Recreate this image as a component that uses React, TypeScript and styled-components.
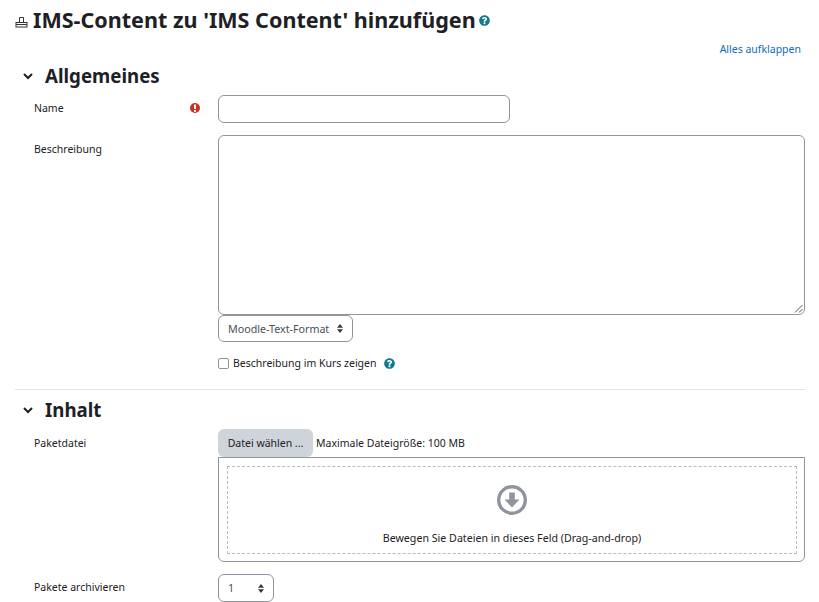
import React from "react";
import styled, { createGlobalStyle } from "styled-components";

const Global = createGlobalStyle`
  html, body { margin: 0; padding: 0; background: #fff; overflow: hidden; height: 602px; }
  body { font-family: "Noto Sans", "Open Sans", sans-serif; font-size: 10.5px; color: #1d2125; }
`;

const Page = styled.main`
  width: 819px;
  height: 602px;
  padding: 0 14px 0 15px;
  box-sizing: border-box;
  overflow: hidden;
`;

const TitleRow = styled.header`
  display: flex;
  align-items: center;
  height: 40px;
`;

const TitleIcon = styled.svg`
  width: 13px;
  height: 13px;
  margin: 2px 5px 0 0;
  flex: none;
`;

const Title = styled.h1`
  margin: 0;
  font-size: 21.55px;
  line-height: 40px;
  font-weight: 700;
  white-space: nowrap;
`;

const CollapseRow = styled.div`
  display: flex;
  justify-content: flex-end;
  height: 18px;
  line-height: 18px;
  padding-right: 4px;
`;

const Link = styled.a`
  color: #0f6cbf;
`;

const SectionHead = styled.div<{ $top?: number }>`
  display: flex;
  align-items: center;
  height: 36px;
  margin-top: ${(p) => p.$top ?? 0}px;
  margin-bottom: 1px;
`;

const Chevron = styled.svg`
  width: 12px;
  height: 12px;
  margin: 0 11px 0 7px;
  flex: none;
`;

const SectionTitle = styled.h2`
  margin: 0;
  font-size: 18.7px;
  font-weight: 700;
  line-height: 36px;
`;

const Row = styled.div<{ $top?: number }>`
  display: grid;
  grid-template-columns: 203px 1fr;
  margin-top: ${(p) => p.$top ?? 0}px;
`;

const LabelCell = styled.div<{ $line?: number }>`
  display: flex;
  justify-content: space-between;
  padding: 0 18px 0 19px;
  height: 28px;
  line-height: ${(p) => p.$line ?? 26}px;
  box-sizing: border-box;
`;

const Control = styled.div`
  min-width: 0;
`;

const TextInput = styled.div`
  width: 292px;
  height: 28px;
  box-sizing: border-box;
  border: 1px solid #8f959e;
  border-radius: 6px;
`;

const TextArea = styled.div`
  position: relative;
  height: 180px;
  box-sizing: border-box;
  border: 1px solid #8f959e;
  border-radius: 6px;
`;

const Grip = styled.svg`
  position: absolute;
  right: 1px;
  bottom: 1px;
  width: 9px;
  height: 9px;
`;

const SelectBox = styled.div<{ $width: number; $height: number }>`
  width: ${(p) => p.$width}px;
  height: ${(p) => p.$height}px;
  box-sizing: border-box;
  display: flex;
  align-items: center;
  justify-content: space-between;
  padding: 0 9px;
  border: 1px solid #8f959e;
  border-radius: 6px;
  color: #495057;
  font-size: 10.7px;
`;

const CheckRow = styled.div`
  display: flex;
  align-items: center;
  height: 16px;
  margin-top: 13px;
`;

const CheckBox = styled.span`
  width: 9px;
  height: 9px;
  border: 1px solid #8f959e;
  border-radius: 2px;
  margin-right: 4px;
  flex: none;
`;

const HelpIcon = styled.svg<{ $left: number }>`
  width: 11px;
  height: 11px;
  margin-left: ${(p) => p.$left}px;
  flex: none;
`;

const Divider = styled.hr`
  border: 0;
  border-top: 1px solid #dee2e6;
  margin: 18px 0 0;
`;

const FileTop = styled.div`
  display: flex;
  align-items: center;
  height: 28px;
`;

const FileButton = styled.div`
  width: 95px;
  height: 28px;
  box-sizing: border-box;
  border-radius: 6px;
  background: #ced4da;
  display: flex;
  align-items: center;
  justify-content: center;
  margin-right: 3px;
`;

const DropArea = styled.div`
  height: 105px;
  box-sizing: border-box;
  border: 1px solid #8f959e;
  border-radius: 0 0 6px 6px;
  padding: 8px 7px 7px 8px;
`;

const DropInner = styled.div`
  height: 88px;
  box-sizing: border-box;
  border: 1px dashed #b8bcc2;
  display: flex;
  flex-direction: column;
  align-items: center;
  padding-top: 17px;
`;

const DropIcon = styled.svg`
  width: 32px;
  height: 32px;
  flex: none;
`;

const DropText = styled.div`
  margin-top: 14px;
  line-height: 16px;
  font-size: 10.65px;
`;

const Help = ({ left }: { left: number }) => (
  <HelpIcon $left={left} viewBox="0 0 512 512">
    <path
      fill="#0f7a8e"
      d="M504 256c0 137-111 248-248 248S8 393 8 256 119 8 256 8s248 111 248 248zM262.700 90c-54.500 0-89.300 23-116.500 63.800-3.500 5.300-2.400 12.400 2.700 16.300l34.700 26.300c5.200 3.900 12.600 3 16.700-2.100 17.900-22.700 30.100-35.800 57.300-35.800 20.400 0 45.700 13.100 45.700 32.900 0 15-12.400 22.700-32.600 34-23.600 13.200-54.800 29.700-54.800 70.900V300c0 6.600 5.400 12 12 12h56c6.600 0 12-5.400 12-12v-1.300c0-28.600 83.500-29.800 83.500-107.100 0-58.200-60.400-102.300-116.800-102.300zM256 338c-25.500 0-46.200 20.700-46.200 46.200s20.700 46.200 46.200 46.200 46.200-20.700 46.200-46.200S281.500 338 256 338z"
    />
  </HelpIcon>
);

const Arrows = () => (
  <svg width="6" height="9" viewBox="0 0 6 9">
    <path fill="#343a40" d="M3 0 6 3.800H0zM3 9 0 5.200H6z" />
  </svg>
);

const Down = () => (
  <Chevron viewBox="0 0 12 12">
    <path d="M2 4l4 4 4-4" fill="none" stroke="#1d2125" strokeWidth="2" />
  </Chevron>
);

export default function App() {
  return (
    <Page>
      <Global />
      <TitleRow>
        <TitleIcon viewBox="0 0 13 13">
          <g fill="none" stroke="#333" strokeWidth="1">
            <path d="M4.500 7V2.500h4V7" />
            <path d="M3 7.500h7" />
            <rect x="1" y="7.500" width="11" height="4.500" />
            <path d="M1 9.500h11" />
          </g>
        </TitleIcon>
        <Title>IMS-Content zu 'IMS Content' hinzufügen</Title>
        <Help left={3} />
      </TitleRow>
      <CollapseRow>
        <Link>Alles aufklappen</Link>
      </CollapseRow>
      <SectionHead>
        <Down />
        <SectionTitle>Allgemeines</SectionTitle>
      </SectionHead>
      <Row>
        <LabelCell>
          <span>Name</span>
          <svg width="10" height="26" viewBox="0 0 10 26">
            <circle cx="5" cy="13" r="5" fill="#ca3120" />
            <rect x="4" y="9.500" width="2" height="4.500" fill="#fff" />
            <rect x="4" y="15" width="2" height="1.800" fill="#fff" />
          </svg>
        </LabelCell>
        <Control>
          <TextInput />
        </Control>
      </Row>
      <Row $top={12}>
        <LabelCell $line={28}>
          <span>Beschreibung</span>
        </LabelCell>
        <Control>
          <TextArea>
            <Grip viewBox="0 0 9 9">
              <path d="M1 8.500 8.500 1M5 8.500 8.500 5" stroke="#555" strokeWidth="1" />
            </Grip>
          </TextArea>
          <SelectBox $width={135} $height={27}>
            Moodle-Text-Format
            <Arrows />
          </SelectBox>
          <CheckRow>
            <CheckBox />
            Beschreibung im Kurs zeigen
            <Help left={8} />
          </CheckRow>
        </Control>
      </Row>
      <Divider />
      <SectionHead $top={2}>
        <Down />
        <SectionTitle>Inhalt</SectionTitle>
      </SectionHead>
      <Row>
        <LabelCell $line={28}>
          <span>Paketdatei</span>
        </LabelCell>
        <Control>
          <FileTop>
            <FileButton>Datei wählen ...</FileButton>
            Maximale Dateigröße: 100 MB
          </FileTop>
          <DropArea>
            <DropInner>
              <DropIcon viewBox="0 0 32 32">
                <circle cx="16" cy="16" r="13.300" fill="none" stroke="#8f959e" strokeWidth="3.400" />
                <path fill="#8f959e" d="M13.200 8.500h5.600v7h4.700L16 23.500 8.500 15.500h4.700z" />
              </DropIcon>
              <DropText>Bewegen Sie Dateien in dieses Feld (Drag-and-drop)</DropText>
            </DropInner>
          </DropArea>
        </Control>
      </Row>
      <Row $top={12}>
        <LabelCell>
          <span>Pakete archivieren</span>
        </LabelCell>
        <Control>
          <SelectBox $width={56} $height={28}>
            1
            <Arrows />
          </SelectBox>
        </Control>
      </Row>
    </Page>
  );
}
